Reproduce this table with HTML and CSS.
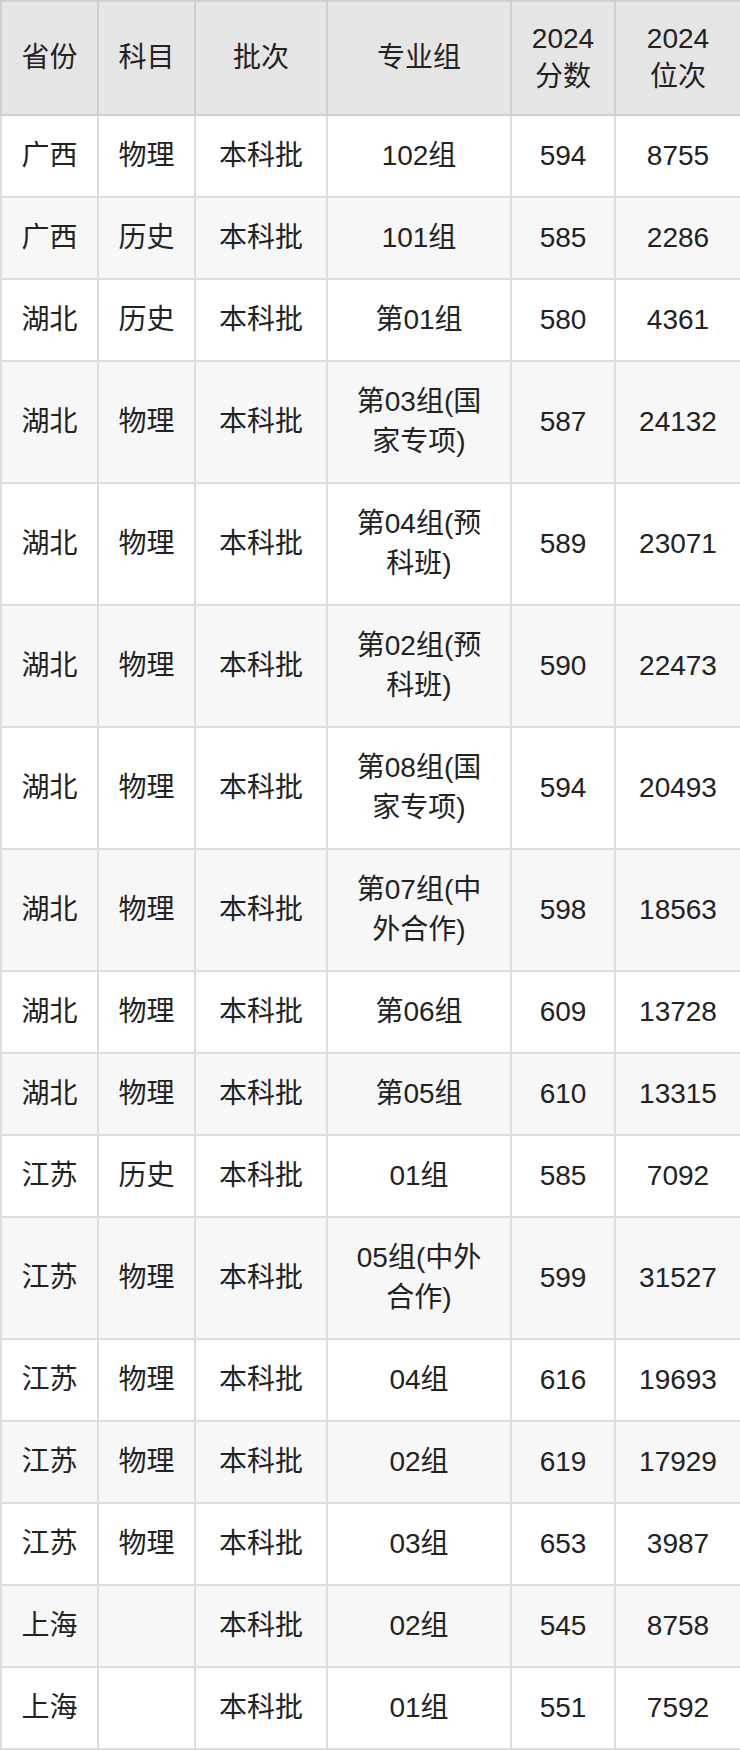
FILE: index.html
```html
<!DOCTYPE html>
<html lang="zh">
<head>
<meta charset="utf-8">
<title>分数线</title>
<link rel="stylesheet" href="styles.css">
</head>
<body>
<table class="score-table">
  <colgroup>
    <col class="c-prov">
    <col class="c-subj">
    <col class="c-batch">
    <col class="c-group">
    <col class="c-score">
    <col class="c-rank">
  </colgroup>
  <thead>
    <tr><th>省份</th><th>科目</th><th>批次</th><th>专业组</th><th>2024分数</th><th>2024位次</th></tr>
  </thead>
  <tbody>
    <tr><td>广西</td><td>物理</td><td>本科批</td><td>102组</td><td>594</td><td>8755</td></tr>
    <tr><td>广西</td><td>历史</td><td>本科批</td><td>101组</td><td>585</td><td>2286</td></tr>
    <tr><td>湖北</td><td>历史</td><td>本科批</td><td>第01组</td><td>580</td><td>4361</td></tr>
    <tr><td>湖北</td><td>物理</td><td>本科批</td><td>第03组(国家专项)</td><td>587</td><td>24132</td></tr>
    <tr><td>湖北</td><td>物理</td><td>本科批</td><td>第04组(预科班)</td><td>589</td><td>23071</td></tr>
    <tr><td>湖北</td><td>物理</td><td>本科批</td><td>第02组(预科班)</td><td>590</td><td>22473</td></tr>
    <tr><td>湖北</td><td>物理</td><td>本科批</td><td>第08组(国家专项)</td><td>594</td><td>20493</td></tr>
    <tr><td>湖北</td><td>物理</td><td>本科批</td><td>第07组(中外合作)</td><td>598</td><td>18563</td></tr>
    <tr><td>湖北</td><td>物理</td><td>本科批</td><td>第06组</td><td>609</td><td>13728</td></tr>
    <tr><td>湖北</td><td>物理</td><td>本科批</td><td>第05组</td><td>610</td><td>13315</td></tr>
    <tr><td>江苏</td><td>历史</td><td>本科批</td><td>01组</td><td>585</td><td>7092</td></tr>
    <tr><td>江苏</td><td>物理</td><td>本科批</td><td>05组(中外合作)</td><td>599</td><td>31527</td></tr>
    <tr><td>江苏</td><td>物理</td><td>本科批</td><td>04组</td><td>616</td><td>19693</td></tr>
    <tr><td>江苏</td><td>物理</td><td>本科批</td><td>02组</td><td>619</td><td>17929</td></tr>
    <tr><td>江苏</td><td>物理</td><td>本科批</td><td>03组</td><td>653</td><td>3987</td></tr>
    <tr><td>上海</td><td></td><td>本科批</td><td>02组</td><td>545</td><td>8758</td></tr>
    <tr><td>上海</td><td></td><td>本科批</td><td>01组</td><td>551</td><td>7592</td></tr>
  </tbody>
</table>
</body>
</html>
```
FILE: styles.css
```css
html, body {
  margin: 0;
  padding: 0;
  background: #ffffff;
}

.score-table {
  width: 740px;
  table-layout: fixed;
  border-collapse: collapse;
  font-family: "Liberation Sans", "Noto Sans CJK SC", sans-serif;
  font-size: 28px;
  color: #222222;
}

.c-prov { width: 97px; }
.c-subj { width: 97px; }
.c-batch { width: 132px; }
.c-group { width: 184px; }
.c-score { width: 104px; }
.c-rank { width: 126px; }

.score-table th {
  background: #e5e5e5;
  border: 2px solid #cfcfcf;
  font-weight: normal;
  line-height: 38px;
  padding: 18px 18px;
  text-align: center;
  vertical-align: middle;
}

.score-table td {
  border: 2px solid #dddddd;
  line-height: 40px;
  padding: 20px 18px;
  text-align: center;
  vertical-align: middle;
}

.score-table tbody tr:nth-child(even) td {
  background: #f7f7f7;
}
```
